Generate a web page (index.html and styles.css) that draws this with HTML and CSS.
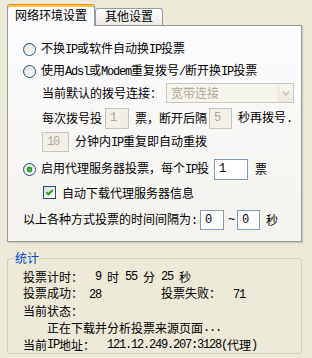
FILE: index.html
```html
<!DOCTYPE html>
<html lang="zh-CN">
<head>
<meta charset="utf-8">
<title>设置</title>
<link rel="stylesheet" href="styles.css">
</head>
<body>
<div class="dlg">
  <div class="tabs">
    <div class="tab tab-on">网络环境设置</div>
    <div class="tab tab-off">其他设置</div>
  </div>
  <div class="pane">
    <div class="row"><span class="radio"></span><span>不换<span class="en">IP</span>或软件自动换<span class="en">IP</span>投票</span></div>
    <div class="row"><span class="radio"></span><span>使用<span class="en">Adsl</span>或<span class="en">Modem</span>重复拨号<span class="en">/</span>断开换<span class="en">IP</span>投票</span></div>
    <div class="row indent"><span>当前默认的拨号连接：</span><span class="combo"><span class="combo-val">宽带连接</span><span class="combo-btn"><svg width="15" height="18" viewBox="0 0 15 18"><path d="M4 7.5 L7.5 11 L11 7.5" fill="none" stroke="#CAC8BB" stroke-width="2"/></svg></span></span></div>
    <div class="row indent"><span>每次拨号投</span><span class="box off w24 ml3">1</span><span class="ml6">票，断开后隔</span><span class="box off w23 ml2">5</span><span class="ml6">秒再拨号<span class="en">.</span></span></div>
    <div class="row indent"><span class="box off w27 h20">10</span><span class="ml6">分钟内<span class="en">IP</span>重复即自动重拨</span></div>
    <div class="row"><span class="radio on"></span><span>启用代理服务器投票，每个<span class="en">IP</span>投</span><span class="box w34 ml5">1</span><span class="ml7">票</span></div>
    <div class="row"><span class="check"><svg width="11" height="11" viewBox="0 0 11 11"><path d="M2.5 5.2 L4.5 7.3 L8.6 3" fill="none" stroke="#21A121" stroke-width="2"/></svg></span><span>自动下载代理服务器信息</span></div>
    <div class="row"><span>以上各种方式投票的时间间隔为<span class="en">:</span></span><span class="box w24 h20 ml3">0</span><span class="en tilde">~</span><span class="box w23 h20">0</span><span class="ml6">秒</span></div>
  </div>
  <fieldset class="stats">
    <legend>统计</legend>
    <div class="stats-grid">
      <div class="srow">投票计时：<span class="en">  9 </span>时<span class="en"> 55 </span>分<span class="en"> 25 </span>秒</div>
      <div class="srow"><span class="cell">投票成功：<span class="en"> 28</span></span><span>投票失败：<span class="en">  71</span></span></div>
      <div class="srow">当前状态：</div>
      <div class="srow"><span class="en">    </span>正在下载并分析投票来源页面<span class="en">...</span></div>
      <div class="srow">当前<span class="en">IP</span>地址：<span class="en">  121.12.249.207:3128(</span>代理<span class="en">)</span></div>
    </div>
  </fieldset>
</div>
</body>
</html>
```

FILE: styles.css
```css
html, body {
  margin: 0;
  padding: 0;
}

body {
  background: #ECE9D8;
  font-family: "Noto Sans CJK SC", sans-serif;
  font-size: 12px;
  line-height: 14px;
  color: #000;
}

.en {
  font-family: "Liberation Mono", monospace;
  letter-spacing: -1.2px;
  white-space: pre;
}

.dlg {
  padding: 0 10px 0 7px;
}

/* tabs */
.tabs {
  display: flex;
  align-items: flex-end;
  height: 25px;
}

.tab {
  box-sizing: border-box;
  border: 1px solid #919B9C;
  border-bottom: none;
  border-radius: 3px 3px 0 0;
  text-align: center;
  white-space: nowrap;
}

.tab-on {
  width: 88px;
  height: 22px;
  margin-bottom: -1px;
  position: relative;
  z-index: 1;
  background: #FCFCFE;
  border-top-color: #E68B2C;
  box-shadow: inset 0 2px 0 #FFC73C;
  padding-top: 3px;
}

.tab-off {
  width: 68px;
  height: 17px;
  background: linear-gradient(#FFFFFF, #ECEBE6);
  padding-top: 0;
}

/* pane */
.pane {
  border: 1px solid #919B9C;
  background: linear-gradient(#FCFCFE, #F4F3EE);
  box-shadow: 1px 1px 0 #D0CEBF, 2px 2px 0 #E3E0D0;
  display: grid;
  grid-template-rows: 22px 22px 22px 28px 20px 34px 13px 42px;
  padding: 12px 0 0 0;
}

.row {
  display: flex;
  align-items: center;
  padding-left: 15px;
  white-space: nowrap;
}

.row.indent {
  padding-left: 34px;
}

.radio {
  flex: none;
  box-sizing: border-box;
  width: 13px;
  height: 13px;
  border: 1px solid #1C5180;
  border-radius: 50%;
  margin-right: 5px;
  background: linear-gradient(135deg, #DCD9CF, #FFFFFF 80%);
}

.radio.on {
  background:
    radial-gradient(circle at 50% 50%, #5CC55C 0, #21A121 2px, #21A121 2.6px, transparent 3.2px),
    linear-gradient(135deg, #DCD9CF, #FFFFFF 80%);
}

.check {
  flex: none;
  box-sizing: border-box;
  width: 13px;
  height: 13px;
  border: 1px solid #1C5180;
  margin-left: 20px;
  margin-right: 6px;
  background: linear-gradient(135deg, #DCD9CF, #FFFFFF 80%);
  display: flex;
}

.check svg {
  display: block;
}

/* combo */
.combo {
  box-sizing: border-box;
  display: flex;
  align-items: center;
  width: 128px;
  height: 20px;
  margin-left: 4px;
  border: 1px solid #C9C7BA;
  background: #F5F4EA;
  color: #ACA899;
}

.combo-val {
  flex: 1;
  padding-left: 4px;
}

.combo-btn {
  box-sizing: border-box;
  width: 15px;
  height: 18px;
  display: flex;
  background: linear-gradient(#F7F6F1, #EAE8DF);
  border-left: 1px solid #E6E4DA;
}

.combo-btn svg {
  display: block;
}

/* text boxes */
.box {
  flex: none;
  box-sizing: border-box;
  height: 21px;
  padding-left: 4px;
  border: 1px solid #7F9DB9;
  background: #FFFFFF;
  font-family: "Liberation Mono", monospace;
  letter-spacing: -1.2px;
  display: flex;
  align-items: center;
}

.box.off {
  border-color: #C9C7BA;
  background: #F1EFE6;
  color: #ACA899;
}

.h20 { height: 20px; }
.w23 { width: 23px; }
.w24 { width: 24px; }
.w27 { width: 27px; }
.w34 { width: 34px; }
.ml2 { margin-left: 2px; }
.ml3 { margin-left: 3px; }
.ml5 { margin-left: 5px; }
.ml6 { margin-left: 6px; }
.ml7 { margin-left: 7px; }

.tilde {
  margin: 0 3px 0 4px;
}

/* statistics group */
.stats {
  margin: 9px 0 0 0;
  border: 1px solid #D0D0BF;
  border-radius: 3px;
  padding: 3px 0 0 15px;
  min-inline-size: 0;
}

.stats legend {
  color: #0046D5;
  padding: 0;
  margin-left: -8px;
  line-height: 14px;
}

.stats-grid {
  display: grid;
  grid-template-rows: repeat(5, 17px);
}

.srow {
  display: flex;
  align-items: center;
  white-space: pre;
}

.cell {
  width: 138px;
}
```
